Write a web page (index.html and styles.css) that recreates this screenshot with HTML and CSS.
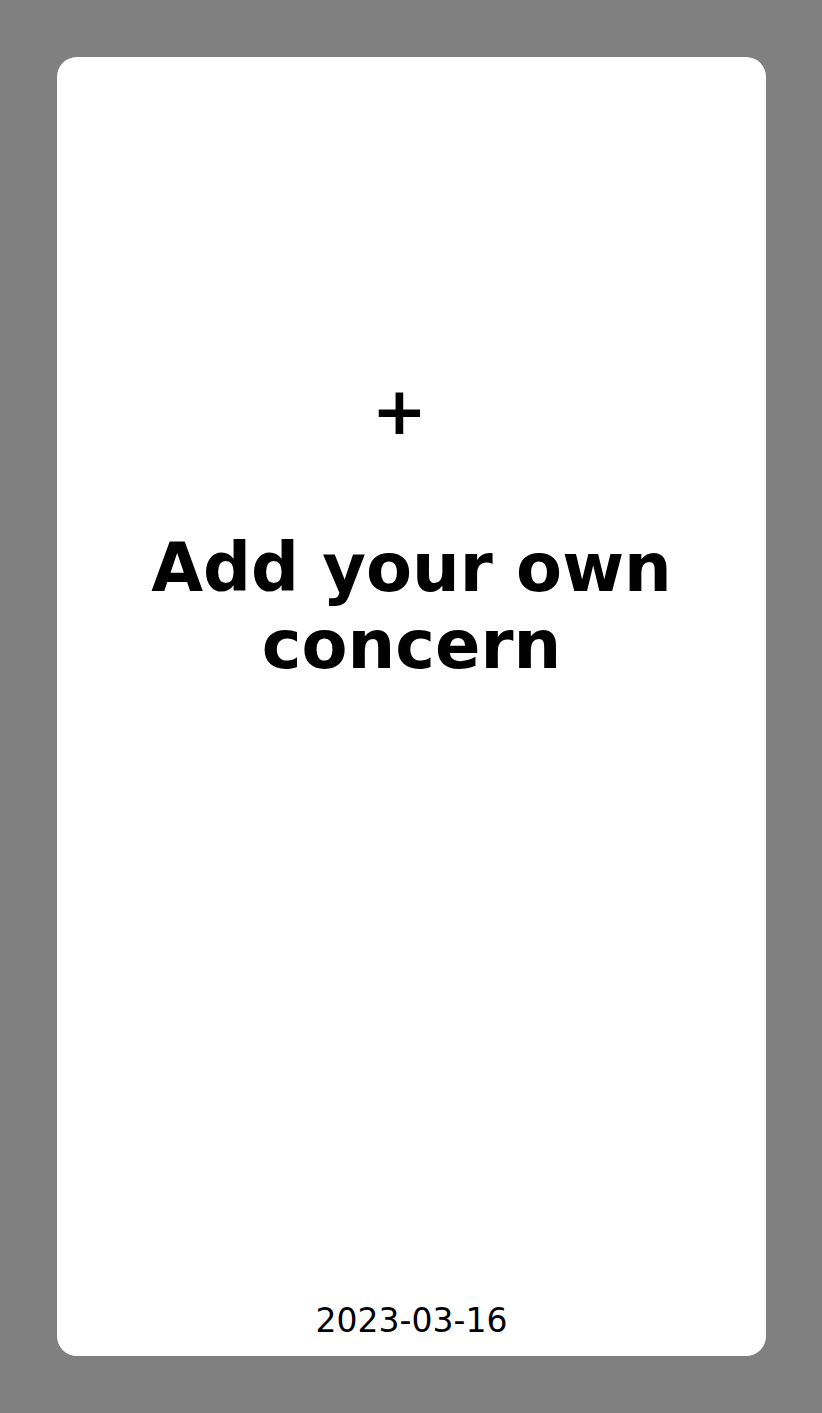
FILE: index.html
```html
<!DOCTYPE html>
<html lang="en">
<head>
<meta charset="utf-8">
<title>Add your own concern</title>
<link rel="stylesheet" href="styles.css">
</head>
<body>
<div class="card">
  <div class="plus">+</div>
  <h1 class="title">Add your own concern</h1>
  <div class="spacer"></div>
  <div class="date">2023-03-16</div>
</div>
</body>
</html>
```
FILE: styles.css
```css
html, body {
  margin: 0;
  padding: 0;
}
body {
  background: #808080;
  font-family: "DejaVu Sans", sans-serif;
  color: #000;
}
.card {
  box-sizing: border-box;
  margin: 57px 56px 57px 57px;
  width: 709px;
  height: 1299px;
  background: #fff;
  border-radius: 20px;
  display: flex;
  flex-direction: column;
  align-items: center;
  padding: 316px 20px 16px;
  text-align: center;
}
.plus {
  font-size: 66px;
  font-weight: bold;
  line-height: 78px;
  padding-right: 24px;
}
.title {
  margin: 79px 0 0;
  font-size: 67px;
  font-weight: bold;
  line-height: 77px;
}
.spacer {
  flex: 1;
}
.date {
  font-size: 33px;
  line-height: normal;
}
```
